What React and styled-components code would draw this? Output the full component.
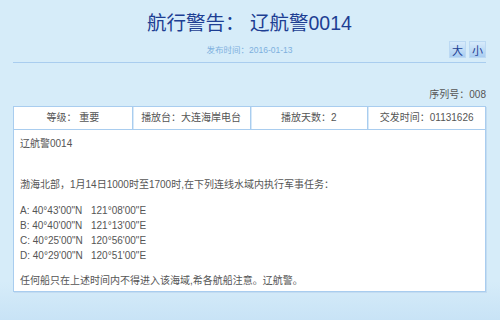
import styled, { createGlobalStyle } from 'styled-components'

const GlobalStyle = createGlobalStyle`
    html, body {
        margin: 0;
        padding: 0;
        height: 100%;
    }
    body {
        background: linear-gradient(to bottom, #d6ecf9 0%, #d6ecf9 88%, #c8e3f6 100%);
        font-family: "Liberation Sans", Arial, "Noto Sans CJK SC", sans-serif;
    }
`

const Page = styled.div`
    width: 500px;
    height: 320px;
    padding: 0 14px 0 13px;
    box-sizing: border-box;
`

const Title = styled.h1`
    margin: 0;
    padding-top: 10px;
    height: 26px;
    line-height: 26px;
    text-align: center;
    font-size: 19.5px;
    font-weight: normal;
    color: #1d3e93;
`

const SubBar = styled.div`
    position: relative;
    height: 26px;
    border-bottom: 1px solid #a9cdef;
    display: flex;
    justify-content: center;
    align-items: center;
`

const Date = styled.span`
    font-size: 8.5px;
    color: #7eb0de;
`

const SizeButtons = styled.div`
    position: absolute;
    right: 0;
    top: 5px;
    display: flex;
    gap: 3px;
`

const SizeButton = styled.span`
    width: 17px;
    height: 17px;
    display: flex;
    align-items: center;
    justify-content: center;
    font-size: 11px;
    color: #1d3e93;
    background: linear-gradient(to bottom, #d8ebfb 0%, #a9cdf1 100%);
    border: 1px solid #bcd9f3;
    box-sizing: border-box;
`

const Serial = styled.div`
    margin-top: 25px;
    text-align: right;
    font-size: 10px;
    color: #555;
    line-height: 14px;
`

const Table = styled.div`
    margin-top: 4px;
    background: #fff;
    border: 1px solid #a9cdef;
    box-shadow: 1px 1px 0 #c3dcf1;
`

const HeaderRow = styled.div`
    display: grid;
    grid-template-columns: repeat(4, 1fr);
    border-bottom: 1px solid #a9cdef;
`

const HeaderCell = styled.div`
    height: 22px;
    line-height: 22px;
    text-align: center;
    font-size: 10px;
    color: #555;
    border-left: ${({first}) => first ? 'none' : '1px solid #a9cdef'};
    box-shadow: ${({first}) => first ? 'none' : 'inset 1px 0 0 #d8e9f8'};
`

const Content = styled.div`
    padding: 6px 6px 3px 6px;
    font-size: 10px;
    line-height: 15px;
    color: #555;
`

const Para = styled.p`
    margin: 0;
    margin-top: ${({gap}) => gap || 0}px;
`

const Coord = styled.div`
    display: flex;
`

const Lat = styled.span`
    width: 71px;
`

function App(){
    const coords = [
        ['A', "40°43'00\"N", "121°08'00\"E"],
        ['B', "40°40'00\"N", "121°13'00\"E"],
        ['C', "40°25'00\"N", "120°56'00\"E"],
        ['D', "40°29'00\"N", "120°51'00\"E"]
    ]

    return(
        <Page>
            <GlobalStyle />
            <Title>航行警告： 辽航警0014</Title>
            <SubBar>
                <Date>发布时间：2016-01-13</Date>
                <SizeButtons>
                    <SizeButton>大</SizeButton>
                    <SizeButton>小</SizeButton>
                </SizeButtons>
            </SubBar>
            <Serial>序列号：008</Serial>
            <Table>
                <HeaderRow>
                    <HeaderCell first>等级： 重要</HeaderCell>
                    <HeaderCell>播放台：大连海岸电台</HeaderCell>
                    <HeaderCell>播放天数：2</HeaderCell>
                    <HeaderCell>交发时间：01131626</HeaderCell>
                </HeaderRow>
                <Content>
                    <Para>辽航警0014</Para>
                    <Para gap={26}>渤海北部，1月14日1000时至1700时,在下列连线水域内执行军事任务：</Para>
                    <Para gap={11}>
                        {coords.map((c, index) =>
                            <Coord key={index}>
                                <Lat>{c[0]}: {c[1]}</Lat>
                                <span>{c[2]}</span>
                            </Coord>
                        )}
                    </Para>
                    <Para gap={10}>任何船只在上述时间内不得进入该海域,希各航船注意。辽航警。</Para>
                </Content>
            </Table>
        </Page>
    )
}

export default App
